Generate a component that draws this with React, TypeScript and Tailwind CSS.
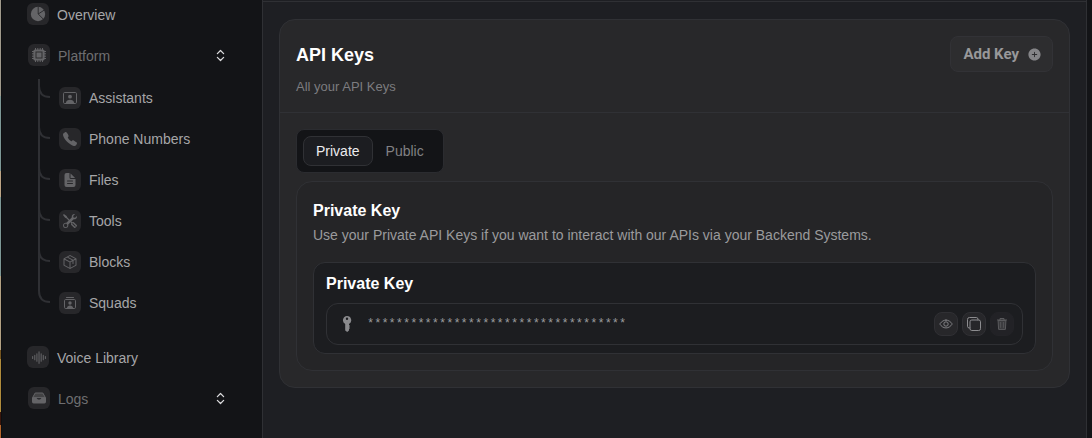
import { useState, type ReactNode } from 'react';
import { ChevronsUpDown } from 'lucide-react';
import { BsSoundwave, BsTools } from 'react-icons/bs';
import { IoAddCircle, IoCall, IoCopyOutline, IoDocumentText, IoEyeOutline } from 'react-icons/io5';
import { PiPackage } from 'react-icons/pi';

function PieIcon() {
  return (
    <svg viewBox="0 0 16 16" className="size-4" aria-hidden="true">
      <circle cx="8" cy="8" r="7.2" fill="currentColor" />
      <path d="M8.2 0.5V8L13.4 13.2M8.2 8L14.4 4" fill="none" stroke="#27272a" strokeWidth="0.9" />
    </svg>
  );
}

function ChipIcon() {
  return (
    <svg viewBox="0 0 16 16" className="size-4" aria-hidden="true">
      <path d="M4.5 1v14M6.8 1v14M9.2 1v14M11.5 1v14M1 4.5h14M1 6.8h14M1 9.2h14M1 11.5h14" stroke="currentColor" strokeWidth="1" />
      <rect x="2.4" y="2.4" width="11.2" height="11.2" rx="1.6" fill="currentColor" />
      <rect x="5" y="5" width="6" height="6" fill="none" stroke="#2c2c2f" strokeWidth="1" />
    </svg>
  );
}

function PersonFrameIcon() {
  return (
    <svg viewBox="0 0 16 16" className="size-4" fill="none" aria-hidden="true">
      <rect x="1.5" y="2.5" width="13" height="11" rx="1.2" stroke="currentColor" />
      <circle cx="8" cy="6.7" r="1.9" fill="currentColor" />
      <path d="M3.8 13c.4-2.3 2-3.2 4.2-3.2s3.8.9 4.2 3.2z" fill="currentColor" />
    </svg>
  );
}

function SquadIcon() {
  return (
    <svg viewBox="0 0 16 16" className="size-4" fill="none" stroke="currentColor" aria-hidden="true">
      <path d="M4.5 2.5h7" strokeLinecap="round" />
      <rect x="2.5" y="4.5" width="11" height="9" rx="1.2" />
      <circle cx="8" cy="8" r="1.7" fill="currentColor" stroke="none" />
      <path d="M4.8 13.2c.3-1.9 1.5-2.7 3.2-2.7s2.9.8 3.2 2.7z" fill="currentColor" stroke="none" />
    </svg>
  );
}

function TrayIcon() {
  return (
    <svg viewBox="0 0 16 16" className="size-4" aria-hidden="true">
      <path d="M4.2 3h7.6l2.6 4.6H1.6z" fill="#434345" stroke="currentColor" strokeLinejoin="round" />
      <path d="M1 7.4h4.6c.2 1.4 1.1 2 2.4 2s2.2-.6 2.4-2H15v4.4a1.6 1.6 0 0 1-1.6 1.6H2.6A1.6 1.6 0 0 1 1 11.8z" fill="currentColor" />
    </svg>
  );
}

function KeyIcon() {
  return (
    <svg viewBox="0 0 16 16" className="size-4" fill="currentColor" aria-hidden="true">
      <path
        fillRule="evenodd"
        d="M8 0a4.2 4.2 0 0 1 2 7.9v1l1.1 1.1-1.1 1 1 1-1 1v1.4L8.2 16 6.2 14.4V7.9A4.2 4.2 0 0 1 8 0zm0 1.5a1.2 1.2 0 1 0 0 2.4 1.2 1.2 0 0 0 0-2.4z"
      />
    </svg>
  );
}

function TrashIcon() {
  return (
    <svg viewBox="0 0 14 14" className="size-3.5" fill="none" stroke="currentColor" aria-hidden="true">
      <path d="M2 3h10M5 3V1.5h4V3" />
      <path d="M3.1 3.5l.5 8.9h6.8l.5-8.9z" fill="currentColor" fillOpacity="0.45" />
      <path d="M5.6 5v5.8M8.4 5v5.8" strokeWidth="0.8" />
    </svg>
  );
}

function IconTile({ children }: { children: ReactNode }) {
  return (
    <span className="flex size-[22px] shrink-0 items-center justify-center rounded-md bg-[#27272a] text-[#646467]">
      {children}
    </span>
  );
}

function Branch({ first, last }: { first: boolean; last: boolean }) {
  return (
    <svg viewBox="0 0 12 41" className="mr-[9px] h-[41px] w-3 shrink-0" fill="none" stroke="#2f3034" strokeWidth="2" aria-hidden="true">
      <path d={`M1 ${first ? 2 : 0}V${last ? 9 : 41}`} />
      <path d="M1 9C1 16 5 20 12 20" />
    </svg>
  );
}

const platformItems = [
  { label: 'Assistants', icon: <PersonFrameIcon /> },
  { label: 'Phone Numbers', icon: <IoCall size={16} /> },
  { label: 'Files', icon: <IoDocumentText size={16} /> },
  { label: 'Tools', icon: <BsTools size={14} /> },
  { label: 'Blocks', icon: <PiPackage size={16} /> },
  { label: 'Squads', icon: <SquadIcon /> },
];

function NavLink({ label, icon, top }: { label: string; icon: ReactNode; top?: boolean }) {
  return (
    <a href="#" className="flex h-[22px] items-center gap-2 text-[#a6a6a8]">
      <IconTile>{icon}</IconTile>
      <span className={top ? 'pt-0.5' : ''}>{label}</span>
    </a>
  );
}

function NavGroup({ label, icon, open, onToggle }: { label: string; icon: ReactNode; open: boolean; onToggle: () => void }) {
  return (
    <button
      type="button"
      aria-expanded={open}
      onClick={onToggle}
      className="mt-[19px] flex h-[22px] w-full items-center gap-2 pr-[34px] pl-px text-[#6e6e70]"
    >
      <IconTile>{icon}</IconTile>
      <span className="flex-1 pt-0.5 text-left">{label}</span>
      <ChevronsUpDown size={15} strokeWidth={2} className="text-[#dcdcde]" />
    </button>
  );
}

function Sidebar() {
  const [platformOpen, setPlatformOpen] = useState(true);
  const [logsOpen, setLogsOpen] = useState(false);
  return (
    <nav className="w-[261px] shrink-0 border-r border-[#2f3034] pt-[3px] pl-[25px] text-sm">
      <NavLink top label="Overview" icon={<PieIcon />} />
      <NavGroup
        label="Platform"
        icon={<ChipIcon />}
        open={platformOpen}
        onToggle={() => setPlatformOpen(!platformOpen)}
      />
      {platformOpen && (
        <ul className="mt-[11px] ml-[11px]">
          {platformItems.map((item, i) => (
            <li key={item.label} className="flex h-[41px] items-center">
              <Branch first={i === 0} last={i === platformItems.length - 1} />
              <NavLink {...item} />
            </li>
          ))}
        </ul>
      )}
      <div className="mt-[23px]">
        <NavLink top label="Voice Library" icon={<BsSoundwave size={17} />} />
      </div>
      <NavGroup label="Logs" icon={<TrayIcon />} open={logsOpen} onToggle={() => setLogsOpen(!logsOpen)} />
    </nav>
  );
}

function IconButton({ label, children, disabled }: { label: string; children: ReactNode; disabled?: boolean }) {
  return (
    <button
      type="button"
      aria-label={label}
      disabled={disabled}
      className="flex size-6 shrink-0 items-center justify-center rounded-lg border border-[#303034] bg-[#27272a] text-[#8c8c8f] disabled:border-[#232327] disabled:bg-[#222226] disabled:text-[#5a5a5d]"
    >
      {children}
    </button>
  );
}

function Tabs({ active, onSelect }: { active: string; onSelect: (tab: string) => void }) {
  return (
    <div role="tablist" className="flex w-fit rounded-lg border border-[#2b2c30] bg-[#131417] p-1.5 text-sm">
      {['Private', 'Public'].map((tab) => (
        <button
          key={tab}
          type="button"
          role="tab"
          aria-selected={tab === active}
          onClick={() => onSelect(tab)}
          className="h-[30px] rounded-lg border border-transparent px-3 text-[#818184] aria-selected:border-[#303135] aria-selected:bg-[#1c1d21] aria-selected:text-[#ececee]"
        >
          {tab}
        </button>
      ))}
    </div>
  );
}

export default function App() {
  const [tab, setTab] = useState('Private');
  return (
    <div className="flex min-h-screen bg-[#131417] font-['Liberation_Sans',Arial,sans-serif]">
      <div className="w-0.5 shrink-0 border-r border-[#0d0e10] bg-[linear-gradient(#a09a8c_0_22%,#7d9896_22%_39%,#bda586_39%_45%,#7d9896_45%_63%,#b3a183_63%_80%,#75551f_80%_82%,#b08c3c_82%_94%,#3a160c_94%_97%,#b5652a_97%)]" />
      <Sidebar />
      <main className="mr-[5px] flex-1 border-r border-[#2f3034] bg-[#1e1f23]">
        <div className="mt-px border-t border-[#2f3034] px-4 py-[17px]">
          <section className="rounded-2xl border border-[#303135] bg-[#28282a]">
            <header className="border-b border-[#303135] px-4 pt-4 pb-[15px]">
              <div className="flex h-9 items-center justify-between">
                <h1 className="pt-0.5 text-lg leading-7 font-bold text-white">API Keys</h1>
                <button
                  type="button"
                  className="flex h-9 items-center gap-2 rounded-lg border border-[#323236] bg-[#2d2d2f] pr-2.5 pl-3 font-[Roboto,sans-serif] text-[15px] font-bold text-[#98989a]"
                >
                  Add Key
                  <IoAddCircle size={15} className="text-[#858588]" />
                </button>
              </div>
              <p className="mt-[5px] text-[13px] leading-5 text-[#7c7c7f]">All your API Keys</p>
            </header>
            <div className="p-4">
              <Tabs active={tab} onSelect={setTab} />
              <div className="mt-2 rounded-2xl border border-[#303135] bg-[#252527] p-4">
                <h2 className="text-base leading-[26px] font-bold text-white">{tab} Key</h2>
                <p className="mt-px text-sm leading-5 text-[#9b9b9d]">
                  Use your {tab} API Keys if you want to interact with our APIs via your Backend Systems.
                </p>
                <div className="mt-[17px] rounded-xl border border-[#303135] bg-[#1c1d20] px-3 py-2">
                  <label htmlFor="api-key" className="block text-base leading-[26px] font-bold text-white">
                    {tab} Key
                  </label>
                  <div className="mt-1.5 flex h-[42px] items-center gap-1 rounded-xl border border-[#303135] px-2 text-[#8a8a8d]">
                    <span className="mr-1 flex size-6 shrink-0 items-center justify-center">
                      <KeyIcon />
                    </span>
                    <input
                      id="api-key"
                      readOnly
                      value={'*'.repeat(36)}
                      className="min-w-0 flex-1 bg-transparent font-['Liberation_Mono',monospace] text-xs text-[#9b9b9d] outline-none"
                    />
                    <IconButton label="Show key">
                      <IoEyeOutline size={14} />
                    </IconButton>
                    <IconButton label="Copy key">
                      <IoCopyOutline size={16} />
                    </IconButton>
                    <IconButton label="Delete key" disabled>
                      <TrashIcon />
                    </IconButton>
                  </div>
                </div>
              </div>
            </div>
          </section>
        </div>
      </main>
    </div>
  );
}
